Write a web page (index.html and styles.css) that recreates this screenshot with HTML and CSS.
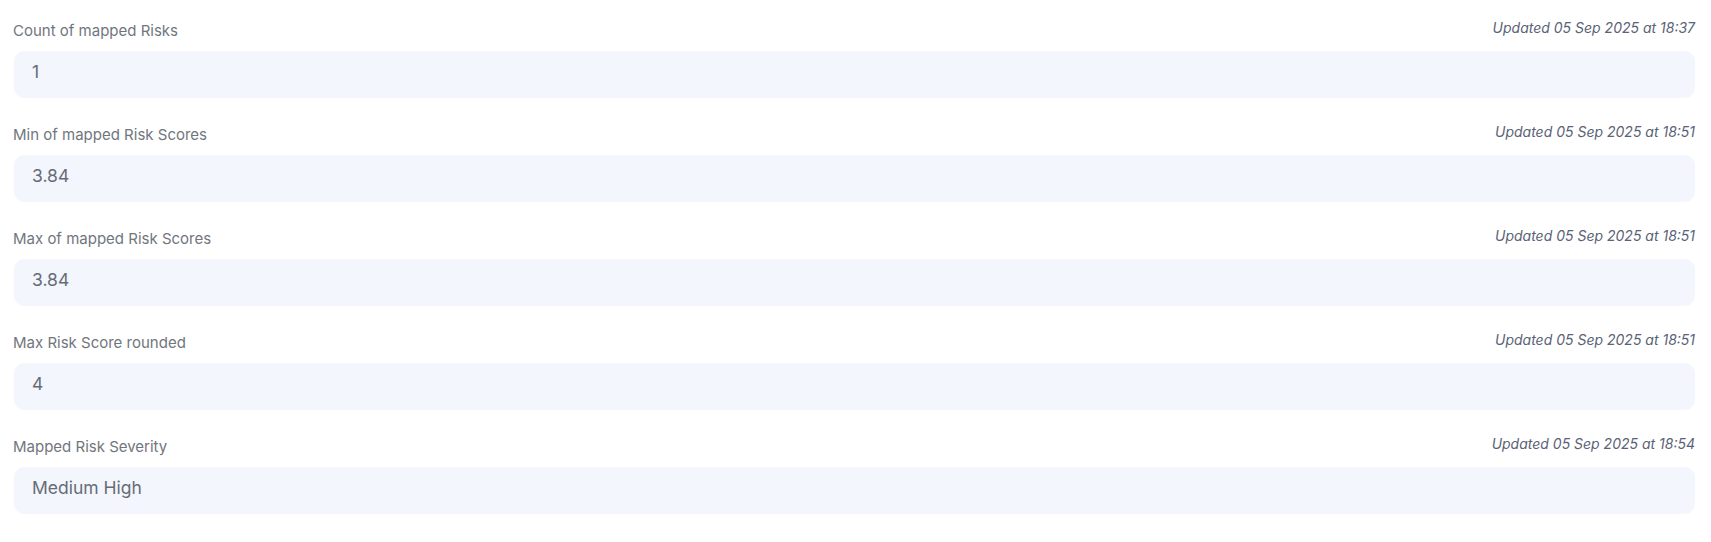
FILE: index.html
```html
<!DOCTYPE html>
<html lang="en">
<head>
<meta charset="utf-8">
<title>Mapped Risks</title>
<link rel="stylesheet" href="styles.css">
</head>
<body>
<div class="fields">
  <div class="field">
    <div class="field-head">
      <span class="label">Count of mapped Risks</span>
      <span class="stamp">Updated 05 Sep 2025 at 18:37</span>
    </div>
    <div class="value">1</div>
  </div>
  <div class="field">
    <div class="field-head">
      <span class="label">Min of mapped Risk Scores</span>
      <span class="stamp">Updated 05 Sep 2025 at 18:51</span>
    </div>
    <div class="value">3.84</div>
  </div>
  <div class="field">
    <div class="field-head">
      <span class="label">Max of mapped Risk Scores</span>
      <span class="stamp">Updated 05 Sep 2025 at 18:51</span>
    </div>
    <div class="value">3.84</div>
  </div>
  <div class="field">
    <div class="field-head">
      <span class="label">Max Risk Score rounded</span>
      <span class="stamp">Updated 05 Sep 2025 at 18:51</span>
    </div>
    <div class="value">4</div>
  </div>
  <div class="field">
    <div class="field-head">
      <span class="label">Mapped Risk Severity</span>
      <span class="stamp">Updated 05 Sep 2025 at 18:54</span>
    </div>
    <div class="value">Medium High</div>
  </div>
</div>
</body>
</html>
```

FILE: styles.css
```css
html, body {
  margin: 0;
  padding: 0;
  background: #ffffff;
}
body {
  font-family: Inter, "Noto Sans", sans-serif;
}
.fields {
  display: flex;
  flex-direction: column;
  padding: 20px 16px 0 14px;
}
.field {
  display: flex;
  flex-direction: column;
  height: 104px;
}
.field-head {
  display: flex;
  justify-content: space-between;
  align-items: flex-start;
  height: 31px;
}
.label {
  font-size: 15px;
  line-height: 21px;
  color: #71767e;
  margin-left: -1px;
}
.stamp {
  font-size: 14px;
  line-height: 16px;
  font-style: italic;
  color: #5a6275;
}
.value {
  box-sizing: border-box;
  height: 47px;
  background: #f3f6fd;
  border-radius: 10px;
  padding: 9px 18px 0 18px;
  font-size: 17.5px;
  line-height: 24px;
  color: #666c77;
}
```
